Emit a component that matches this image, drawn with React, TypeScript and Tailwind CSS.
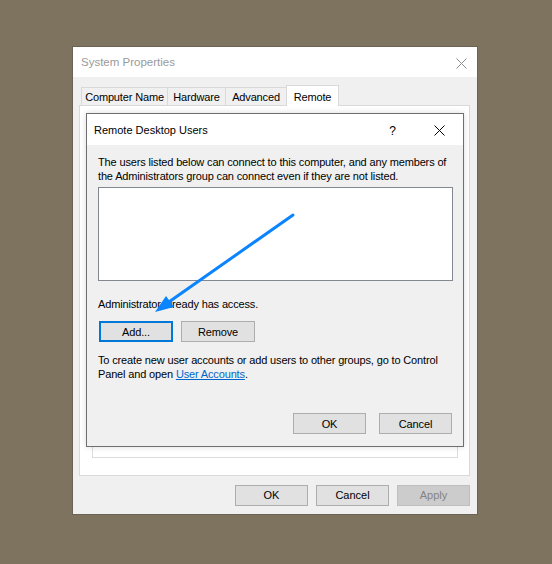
import React from 'react'

const font = { fontFamily: '"Liberation Sans", Arial, sans-serif' }

function CloseIcon({ className }: { className: string }) {
  return (
    <svg width="11" height="11" viewBox="0 0 11 11" className={className}>
      <path d="M0.5 0.5 L10.5 10.5 M10.5 0.5 L0.5 10.5" stroke="currentColor" strokeWidth="1" fill="none" />
    </svg>
  )
}

function Btn({ label, focused, disabled, width = 'w-[74px]' }: { label: string; focused?: boolean; disabled?: boolean; width?: string }) {
  return (
    <div
      className={`${width} h-[21px] flex items-center justify-center text-[11px] ${
        disabled
          ? 'bg-[#cccccc] border border-[#bfbfbf] text-[#838383]'
          : focused
            ? 'bg-[#e1e1e1] border-2 border-[#0078d7] text-black'
            : 'bg-[#e1e1e1] border border-[#adadad] text-black'
      }`}
    >
      {label}
    </div>
  )
}

const tabs = [
  { name: 'Computer Name', w: 'w-[87px]' },
  { name: 'Hardware', w: 'w-[58px]' },
  { name: 'Advanced', w: 'w-[61px]' },
]

export default function App() {
  return (
    <div className="relative w-[552px] h-[564px] bg-[#7d735f] pt-[46px] pl-[72px]" style={font}>
      <div className="relative w-[406px] h-[469px] border border-[#6a6253] flex flex-col">
        {/* title bar */}
        <div className="h-[30px] bg-white flex items-center justify-between pl-[8px] pr-[10px] pt-[2px]">
          <span className="text-[11.5px] text-[#9a9a9a]">System Properties</span>
          <CloseIcon className="text-[#8c8c8c]" />
        </div>

        {/* body */}
        <div className="flex-1 bg-[#f0f0f0] pt-[8px] pl-[6px] pr-[7px] flex flex-col">
          <div className="h-[20px] flex items-end pl-[2px] tracking-[-0.15px]">
            {tabs.map((t, i) => (
              <div
                key={t.name}
                className={`${t.w} h-[18px] border-t border-r border-[#d9d9d9] ${i === 0 ? 'border-l' : ''} bg-[#f0f0f0] flex items-center justify-center pt-px text-[11px] text-black`}
              >
                {t.name}
              </div>
            ))}
            <div className="relative z-10 -mb-px w-[53px] h-[21px] -ml-px border-t border-l border-r border-[#d9d9d9] bg-white flex items-start justify-center pt-[3px] text-[11px] text-black">
              Remote
            </div>
          </div>

          <div className="h-[371px] bg-white border border-[#d9d9d9] flex flex-col justify-end pl-[12px] pr-[11px] pb-[17px]">
            <div className="h-[120px] border border-[#dcdcdc] flex flex-col justify-end items-end pr-[9px] pb-[10px]">
              <div className="w-[92px] h-[21px] bg-[#e1e1e1] border border-[#adadad]" />
            </div>
          </div>

          <div className="mt-[9px] flex justify-end gap-[8px]">
            <Btn label="OK" width="w-[73px]" />
            <Btn label="Cancel" width="w-[73px]" />
            <Btn label="Apply" disabled width="w-[73px]" />
          </div>
        </div>

        {/* Remote Desktop Users dialog */}
        <div className="absolute left-[13px] top-[66px] w-[378px] h-[334px] border border-[#6f6f6f] flex flex-col shadow-[0_0_6px_rgba(0,0,0,0.15)]">
          <div className="h-[31px] bg-white flex items-center pl-[7px] pr-[18px] pt-[2px]">
            <span className="flex-1 text-[11px] text-black">Remote Desktop Users</span>
            <span className="text-[12px] text-black mr-[38px]">?</span>
            <CloseIcon className="text-black" />
          </div>
          <div className="flex-1 bg-[#f0f0f0] pl-[11px] pr-[10px] pt-[10px] pb-[12px] flex flex-col text-[11px] leading-[14px] text-black tracking-[-0.15px]">
            <p>
              The users listed below can connect to this computer, and any members of the Administrators group can
              connect even if they are not listed.
            </p>
            <div className="mt-[4px] h-[94px] bg-white border border-[#828790]" />
            <p className="mt-[16px]">Administrator already has access.</p>
            <div className="mt-[10px] ml-px flex gap-[8px]">
              <Btn label="Add..." focused />
              <Btn label="Remove" />
            </div>
            <p className="mt-[11px]">
              To create new user accounts or add users to other groups, go to Control Panel and open{' '}
              <span className="text-[#0066cc] underline">User Accounts</span>.
            </p>
            <div className="mt-auto mr-px flex justify-end gap-[13px]">
              <Btn label="OK" width="w-[73px]" />
              <Btn label="Cancel" width="w-[73px]" />
            </div>
          </div>
        </div>
      </div>

      {/* annotation arrow */}
      <svg className="absolute inset-0 pointer-events-none" width="552" height="564" viewBox="0 0 552 564">
        <line x1="293" y1="215" x2="166" y2="304" stroke="#0a84ff" strokeWidth="3" strokeLinecap="round" />
        <polygon points="155,312 166,296 174,307" fill="#0a84ff" />
      </svg>
    </div>
  )
}
